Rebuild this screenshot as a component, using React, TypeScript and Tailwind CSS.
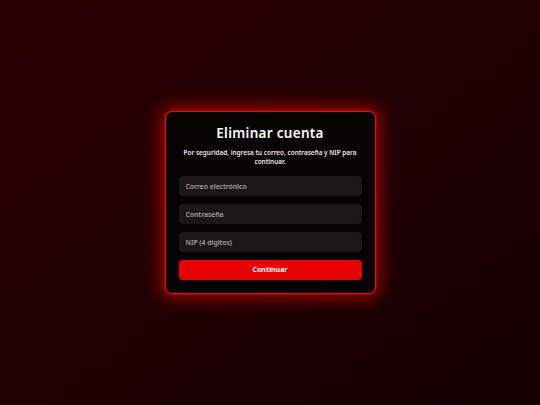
import { useState } from 'react';

export default function App() {
  const [email, setEmail] = useState('');
  const [password, setPassword] = useState('');
  const [pin, setPin] = useState('');

  const inputClass =
    'h-5 w-full rounded-[4px] bg-[#1c1616] px-[7px] text-[6.8px] font-semibold text-white placeholder-[#aaa3a3] outline-none';

  return (
    <div
      className="flex h-[405px] w-[540px] items-center justify-center bg-gradient-to-br from-[#2c0004] to-[#150002]"
      style={{ fontFamily: '"Noto Sans", "Open Sans", sans-serif' }}
    >
      <div className="w-[209px] rounded-[6px] bg-[#070303] p-[13px] shadow-[0_0_2px_1px_#ff1a1a,0_0_18px_5px_rgba(255,0,0,0.55)]">
        <h1 className="text-center text-[13.5px] font-semibold leading-[17px] tracking-[0.3px] text-white">
          Eliminar cuenta
        </h1>
        <p className="mx-auto mt-[6px] w-[180px] text-center text-[6.4px] font-semibold leading-[9px] text-[#ece6e6]">
          Por seguridad, ingresa tu correo, contraseña y NIP para continuar.
        </p>
        <div className="mt-[10px] flex flex-col gap-2">
          <input
            type="email"
            value={email}
            onChange={(e) => setEmail(e.target.value)}
            placeholder="Correo electrónico"
            className={inputClass}
          />
          <input
            type="password"
            value={password}
            onChange={(e) => setPassword(e.target.value)}
            placeholder="Contraseña"
            className={inputClass}
          />
          <input
            type="password"
            value={pin}
            onChange={(e) => setPin(e.target.value)}
            placeholder="NIP (4 dígitos)"
            className={inputClass}
          />
          <button className="h-5 w-full rounded-[4px] bg-[#e60000] text-[7px] font-bold text-white">
            Continuar
          </button>
        </div>
      </div>
    </div>
  );
}
